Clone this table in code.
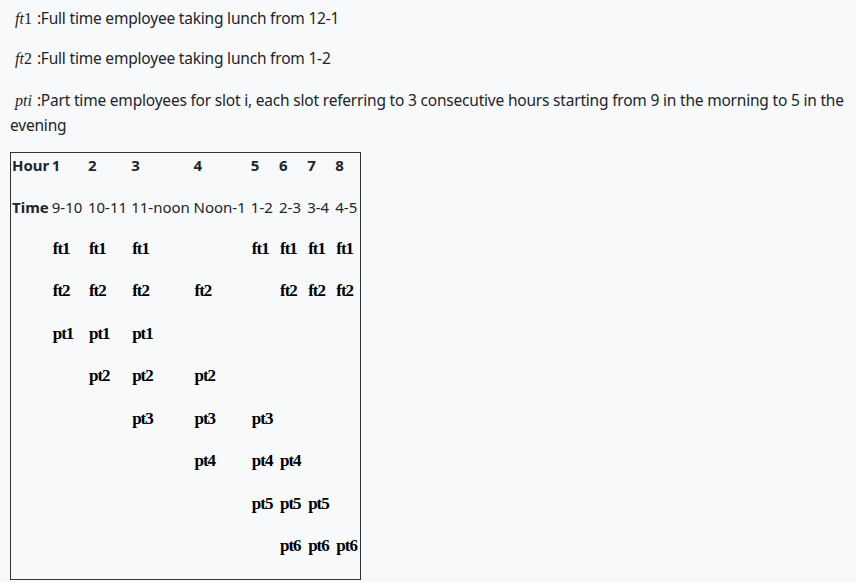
const sans = "font-['Noto_Sans','Open_Sans',sans-serif]";

const cols = [40, 36, 43, 62, 57, 28, 28, 28, 26];

const slots: string[][] = [
  ['', 'ft1', 'ft1', 'ft1', '', 'ft1', 'ft1', 'ft1', 'ft1'],
  ['', 'ft2', 'ft2', 'ft2', 'ft2', '', 'ft2', 'ft2', 'ft2'],
  ['', 'pt1', 'pt1', 'pt1', '', '', '', '', ''],
  ['', '', 'pt2', 'pt2', 'pt2', '', '', '', ''],
  ['', '', '', 'pt3', 'pt3', 'pt3', '', '', ''],
  ['', '', '', '', 'pt4', 'pt4', 'pt4', '', ''],
  ['', '', '', '', '', 'pt5', 'pt5', 'pt5', ''],
  ['', '', '', '', '', '', 'pt6', 'pt6', 'pt6'],
];

const hours = ['Hour', '1', '2', '3', '4', '5', '6', '7', '8'];
const times = ['Time', '9-10', '10-11', '11-noon', 'Noon-1', '1-2', '2-3', '3-4', '4-5'];

const Var = ({ name, digit }: { name: string; digit?: string }) => (
  <span className="ml-[5px] mr-[5px] font-['Liberation_Serif',serif] text-[16px] tracking-normal">
    <i>{name}</i>
    {digit}
  </span>
);

export default function App() {
  return (
    <div className={`min-h-[583px] bg-[#f8f9fb] px-[10px] text-[15px] leading-6 text-[#212529] ${sans}`}>
      <div className="text-[15.5px] tracking-[-0.2px]">
        <p className="pt-[6px]">
          <Var name="ft" digit="1" />:Full time employee taking lunch from 12-1
        </p>
        <p className="mt-[15px]">
          <Var name="ft" digit="2" />:Full time employee taking lunch from 1-2
        </p>
        <p className="mt-[17px]">
          <Var name="pti" />:Part time employees for slot i, each slot referring to 3 consecutive hours starting from 9 in the morning to 5 in the evening
        </p>
      </div>
      <table className="mt-[15px] table-fixed border border-[#333]" style={{ width: 351 }}>
        <colgroup>
          {cols.map((w, i) => (
            <col key={i} style={{ width: w }} />
          ))}
        </colgroup>
        <tbody>
          <tr className="h-[42px] align-top">
            {hours.map((h, i) => (
              <td key={i} className="px-[1px] font-bold leading-6 whitespace-nowrap">
                {h}
              </td>
            ))}
          </tr>
          <tr className="h-[42px] align-top">
            {times.map((t, i) => (
              <td key={i} className={`px-[1px] leading-6 whitespace-nowrap ${i === 0 ? 'font-bold' : ''}`}>
                {t}
              </td>
            ))}
          </tr>
          {slots.map((row, r) => (
            <tr key={r} className={`align-top ${r === slots.length - 1 ? 'h-[45px]' : 'h-[42.5px]'}`}>
              {row.map((c, i) => (
                <td
                  key={i}
                  className="px-[2px] leading-6 whitespace-nowrap font-['Liberation_Serif',serif] text-[17px] font-bold tracking-[-1px] text-black"
                >
                  {c}
                </td>
              ))}
            </tr>
          ))}
        </tbody>
      </table>
    </div>
  );
}
